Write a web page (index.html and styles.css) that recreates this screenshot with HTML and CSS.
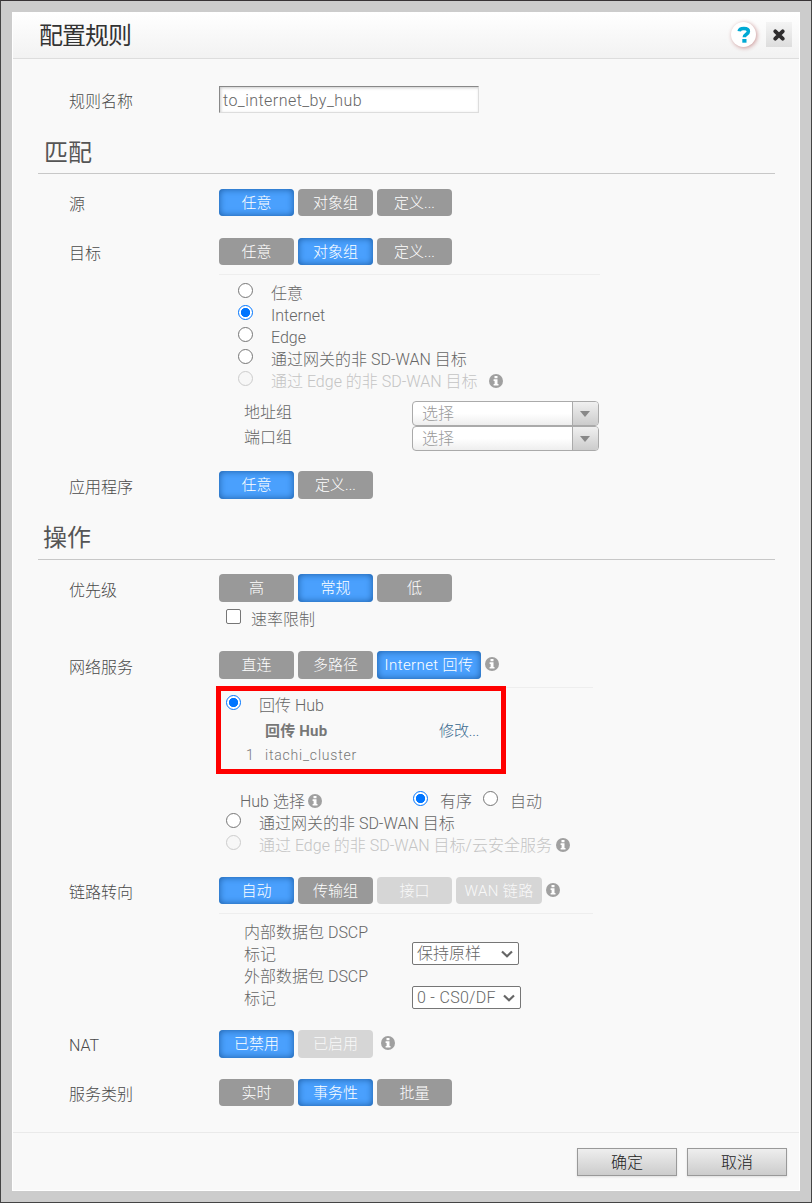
FILE: index.html
```html
<!DOCTYPE html>
<html lang="zh-CN">
<head>
<meta charset="utf-8">
<title>配置规则</title>
<link rel="stylesheet" href="styles.css">
</head>
<body>
<svg class="defs" width="0" height="0">
  <symbol id="info" viewBox="0 0 14 14"><circle cx="7" cy="7" r="7" fill="#a0a0a0"/><path d="M5.500 2h3v2.200h-3zM4.600 5.300h3.900v4.600h1v1.700H4.600V9.900h1V7h-1z" fill="#fff"/></symbol>
  <symbol id="chev" viewBox="0 0 12 8"><path d="M1 1.500 6 6.300l5-4.800" fill="none" stroke="#666" stroke-width="2.200"/></symbol>
</svg>
<div class="frame">
<div class="modal">
  <header class="head">
    <h1>配置规则</h1>
    <div class="tools">
      <span class="help"><svg width="14" height="18" viewBox="0 0 14 18"><path d="M2.200 5.300C2.400 3.400 4.200 2.500 6.900 2.500c3 0 4.500 1 4.500 2.900 0 3-4.100 2.600-4.100 5.900" fill="none" stroke="#00a9d4" stroke-width="3.500"/><path d="M5.300 13h4.200v3.700H5.300z" fill="#00a9d4"/></svg></span>
      <span class="close"><svg width="12" height="12" viewBox="0 0 12 12"><path d="M2.300 2.300l7.400 7.400M9.700 2.300L2.300 9.700" stroke="#2e2c2d" stroke-width="3.800" stroke-linecap="round"/></svg></span>
    </div>
  </header>
  <main>
    <div class="row name"><label>规则名称</label><div class="input">to_internet_by_hub</div></div>
    <h2 class="match">匹配</h2>
    <div class="row src"><label>源</label><div class="btns"><b class="on">任意</b><b>对象组</b><b>定义...</b></div></div>
    <div class="row dst"><label>目标</label><div class="btns"><b>任意</b><b class="on">对象组</b><b>定义...</b></div></div>
    <div class="sub sub-dst">
      <div class="line"><i class="radio"></i><span>任意</span></div>
      <div class="line"><i class="radio checked"></i><span>Internet</span></div>
      <div class="line"><i class="radio"></i><span>Edge</span></div>
      <div class="line"><i class="radio"></i><span>通过网关的非 SD-WAN 目标</span></div>
      <div class="line off"><i class="radio"></i><span>通过 Edge 的非 SD-WAN 目标</span><svg class="info gap"><use href="#info"/></svg></div>
      <div class="groups">
        <span class="key">地址组</span><div class="combo"><span>选择</span><em></em></div>
        <span class="key">端口组</span><div class="combo"><span>选择</span><em></em></div>
      </div>
    </div>
    <div class="row app tall"><label>应用程序</label><div class="btns"><b class="on">任意</b><b>定义...</b></div></div>
    <h2 class="action">操作</h2>
    <div class="row prio tall"><label>优先级</label><div class="btns"><b>高</b><b class="on">常规</b><b>低</b></div></div>
    <div class="line limit"><i class="check"></i><span>速率限制</span></div>
    <div class="row net tall"><label>网络服务</label><div class="btns"><b>直连</b><b>多路径</b><b class="on wide">Internet 回传</b><svg class="info"><use href="#info"/></svg></div></div>
    <div class="sub sub-net">
      <div class="line"><i class="radio checked"></i><span>回传 Hub</span></div>
      <div class="hub hub-head"><strong>回传 Hub</strong><a>修改...</a></div>
      <div class="hub"><span class="num">1</span><span>itachi_cluster</span></div>
      <div class="line pick"><span class="pick-key">Hub 选择</span><svg class="info"><use href="#info"/></svg><i class="radio checked first"></i><span>有序</span><i class="radio second"></i><span>自动</span></div>
      <div class="line"><i class="radio"></i><span>通过网关的非 SD-WAN 目标</span></div>
      <div class="line off"><i class="radio"></i><span>通过 Edge 的非 SD-WAN 目标/云安全服务</span><svg class="info near"><use href="#info"/></svg></div>
      <div class="highlight"></div>
    </div>
    <div class="row link"><label>链路转向</label><div class="btns"><b class="on">自动</b><b>传输组</b><b class="dis">接口</b><b class="dis wan">WAN 链路</b><svg class="info"><use href="#info"/></svg></div></div>
    <div class="sub sub-link">
      <div class="tag"><span>内部数据包 DSCP<br>标记</span><div class="select s1"><span>保持原样</span><svg width="12" height="8"><use href="#chev"/></svg></div></div>
      <div class="tag"><span>外部数据包 DSCP<br>标记</span><div class="select s2"><span>0 - CS0/DF</span><svg width="12" height="8"><use href="#chev"/></svg></div></div>
    </div>
    <div class="row nat tall"><label>NAT</label><div class="btns"><b class="on">已禁用</b><b class="dis">已启用</b><svg class="info far"><use href="#info"/></svg></div></div>
    <div class="row svc"><label>服务类别</label><div class="btns"><b>实时</b><b class="on">事务性</b><b>批量</b></div></div>
  </main>
  <footer><button>确定</button><button>取消</button></footer>
</div>
</div>
</body>
</html>
```
FILE: styles.css
```css
* { box-sizing: border-box; }
body { margin: 0; background: #444; color: #666; font: 300 16px/22px Roboto, "Noto Sans CJK SC", sans-serif; }
.defs { position: absolute; }
.frame { width: 812px; height: 1203px; padding: 11px; background: #ccc; border: 1px solid #444; border-top-color: #373335; }
.modal { width: 788px; height: 1179px; background: #f9f9f9; border: 1px solid #fff; border-top: 0; }
.head { height: 47px; display: flex; justify-content: space-between; padding: 0 7px 0 26px; border-bottom: 1px solid #ddd; background: linear-gradient(#fff, #f2f2f2); }
h1 { margin: 0; font-size: 24px; font-weight: 400; letter-spacing: -1px; line-height: 49px; color: #333; }
.tools { display: flex; gap: 10px; padding-top: 10px; }
.help { width: 25px; height: 25px; border-radius: 50%; background: #fff; box-shadow: 1px 1px 4px #c99; display: flex; align-items: center; justify-content: center; }
.close { width: 26px; height: 25px; background: linear-gradient(#f4f4f4, #ddd); display: flex; align-items: center; justify-content: center; }
.row { display: flex; height: 27px; padding-left: 56px; }
.row label { width: 150px; height: 27px; line-height: 32px; white-space: nowrap; color: #4a4a4a; }
.name label { line-height: 31px; }
.tall { height: 28px; }
.tall label { line-height: 33px; }
.name { margin-top: 27px; }
.input { width: 260px; height: 27px; line-height: 27px; padding-left: 3px; letter-spacing: .45px; background: #fff; border: 1px solid #ddd; border-top-color: #888; border-left-color: #888; box-shadow: inset 1px 1px 3px #ccc; }
h2 { margin: 26px 24px 0 25px; height: 35px; padding-left: 6px; border-bottom: 1px solid #c8c8c8; font-size: 24px; font-weight: 400; line-height: 28px; color: #555; }
.action { height: 36px; margin-top: 25px; padding-left: 5px; }
.src { margin-top: 15px; }
.dst { margin-top: 22px; }
.app { margin-top: 20px; }
.prio { margin-top: 14px; }
.net, .nat, .link, .svc { margin-top: 21px; }
.nat label { line-height: 32px; }
.btns { display: flex; gap: 4px; }
.btns b { width: 75px; border-radius: 4px; background: #999; color: #fff; font-size: 15px; font-weight: 300; line-height: 28px; text-align: center; white-space: nowrap; }
.btns .on { background: #4aa0fd; box-shadow: inset 0 0 7px #1b5a9f; }
.btns .dis { background: #d6d6d6; color: #f9f9f9; }
.btns .wide { width: 104px; letter-spacing: .4px; }
.btns .wan { width: 86px; letter-spacing: .4px; }
.info { width: 14px; height: 14px; flex: none; }
.btns .info { margin-top: 6px; }
.btns .far { margin-left: 4px; }
.sub { position: relative; margin: 9px 0 0 206px; width: 381px; border-top: 1px solid #eee; padding-top: 7px; }
.line { display: flex; align-items: center; height: 22px; white-space: nowrap; }
.line > span { padding-top: 2px; }
.radio { width: 15px; height: 15px; flex: none; margin: -5px 18px 0 19px; border: 1.5px solid #767676; border-radius: 50%; background: #fff; }
.radio.checked { border-color: #0075ff; background: radial-gradient(circle, #0075ff 0 4.300px, #fff 5px); }
.off { color: #c4c4c4; }
.off .radio { border-color: #ccc; background: #f7f7f7; }
.gap { margin-left: 11px; }
.near { margin-left: 4px; }
.groups { margin: 9px 0 0 25px; display: grid; grid-template-columns: 168px 187px; grid-auto-rows: 25px; }
.key { line-height: 24px; }
.combo { display: flex; justify-content: space-between; border: 1px solid #aaa; border-radius: 4px; background: linear-gradient(#fff 50%, #eee); padding-left: 9px; line-height: 23px; color: #999; overflow: hidden; }
.combo em { width: 26px; padding-right: 2px; border-left: 1px solid #aaa; background: linear-gradient(#f0f0f0, #ccc); display: flex; align-items: center; justify-content: center; }
.combo em::after { content: ""; border: 5px solid transparent; border-top: 6px solid #888; border-bottom: 0; }
.limit { margin: 6px 0 0 213px; }
.check { width: 15px; height: 15px; margin: -5px 10px 0 0; border: 1px solid #767676; border-radius: 2px; background: #fff; }
.sub-net { margin-top: 8px; width: 374px; padding-top: 6px; }
.sub-net .radio { margin-left: 7px; }
.hub { display: flex; height: 24px; line-height: 24px; padding-left: 27px; font-size: 14px; letter-spacing: .8px; color: #777; }
.hub-head { margin-top: 3px; padding-left: 46px; }
.hub strong { width: 174px; font-size: 15px; font-weight: 700; letter-spacing: .2px; }
.hub a { color: #36678d; font-size: 15px; letter-spacing: -.1px; }
.num { width: 19px; }
.pick { margin-top: 23px; padding-left: 21px; }
.pick-key { width: 68px; }
.sub-net .first { margin-left: 91px; margin-right: 12px; }
.sub-net .second { margin-left: 11px; margin-right: 12px; }
.highlight { position: absolute; left: -3px; top: -2px; width: 290px; height: 88px; border: 5px solid #f00; }
.sub-link { width: 374px; padding-top: 7px; }
.tag { display: flex; align-items: flex-end; height: 44px; padding-left: 25px; }
.tag > span { width: 168px; margin-bottom: -1px; }
.select { height: 23px; display: flex; align-items: center; justify-content: space-between; padding: 0 5px 0 4px; border: 1px solid #767676; border-radius: 2px; background: #fff; white-space: nowrap; }
.select span { padding-top: 1px; }
.s1 { width: 107px; }
.s2 { width: 109px; letter-spacing: .3px; }
footer { margin-top: 26px; height: 58px; display: flex; justify-content: flex-end; gap: 10px; padding: 15px 12px 0 0; border-top: 1px solid #eaeaea; }
button { width: 100px; height: 28px; padding: 2px 0 0; border: 1px solid #999; background: linear-gradient(#eee, #ccc); box-shadow: 0 1px 2px #ddd; font: 300 16px/24px Roboto, "Noto Sans CJK SC", sans-serif; color: #222; }
```
